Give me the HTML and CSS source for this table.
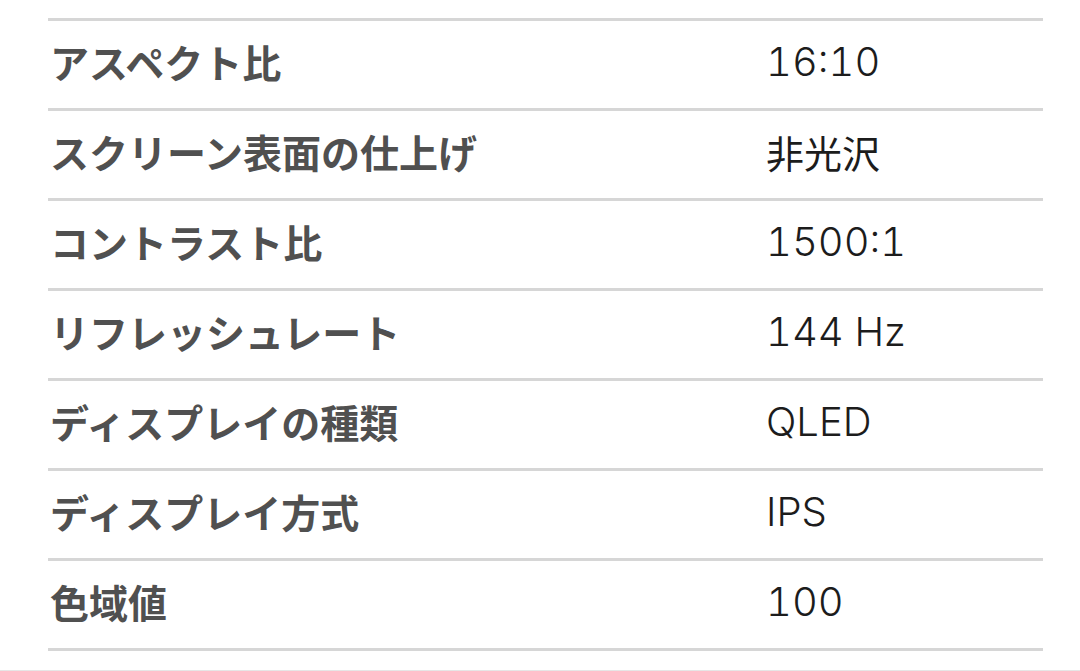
FILE: index.html
```html
<!DOCTYPE html>
<html lang="ja">
<head>
<meta charset="utf-8">
<link rel="stylesheet" href="styles.css">
</head>
<body>
<div class="page">
  <div class="spec">
    <div class="row"><div class="label">アスペクト比</div><div class="value num">16:10</div></div>
    <div class="row"><div class="label">スクリーン表面の仕上げ</div><div class="value ja">非光沢</div></div>
    <div class="row"><div class="label">コントラスト比</div><div class="value num">1500:1</div></div>
    <div class="row"><div class="label">リフレッシュレート</div><div class="value num">144 Hz</div></div>
    <div class="row"><div class="label">ディスプレイの種類</div><div class="value">QLED</div></div>
    <div class="row"><div class="label">ディスプレイ方式</div><div class="value">IPS</div></div>
    <div class="row"><div class="label">色域値</div><div class="value num">100</div></div>
    <div class="row end"></div>
  </div>
  <div class="footer"></div>
</div>
</body>
</html>
```
FILE: styles.css
```css
html, body {
  margin: 0;
  padding: 0;
  background: #ffffff;
}
.page {
  width: 1080px;
  height: 671px;
  overflow: hidden;
  display: flex;
  flex-direction: column;
}
.spec {
  margin: 18px 0 0 48px;
  width: 995px;
  display: flex;
  flex-direction: column;
}
.row {
  border-top: 3px solid #d6d6d6;
  display: flex;
  align-items: center;
  padding-bottom: 6px;
  height: 81px;
}
.row.end {
  height: 19px;
  padding-bottom: 0;
}
.label {
  width: 716px;
  padding-left: 2px;
  font-family: "Noto Sans CJK JP", sans-serif;
  font-weight: 700;
  font-size: 39px;
  color: #505050;
  line-height: 1;
}
.value {
  font-family: Inter, "Noto Sans CJK JP", sans-serif;
  font-weight: 300;
  font-size: 40px;
  color: #1c1c1c;
  line-height: 1;
}
.value.num {
  font-variant-numeric: tabular-nums;
}
.value.ja {
  font-family: "Noto Sans CJK JP", sans-serif;
  font-weight: 400;
  font-size: 38px;
}
.footer {
  border-top: 2px solid #e6e6e6;
  flex: 1;
  background: #fafafa;
}
```
